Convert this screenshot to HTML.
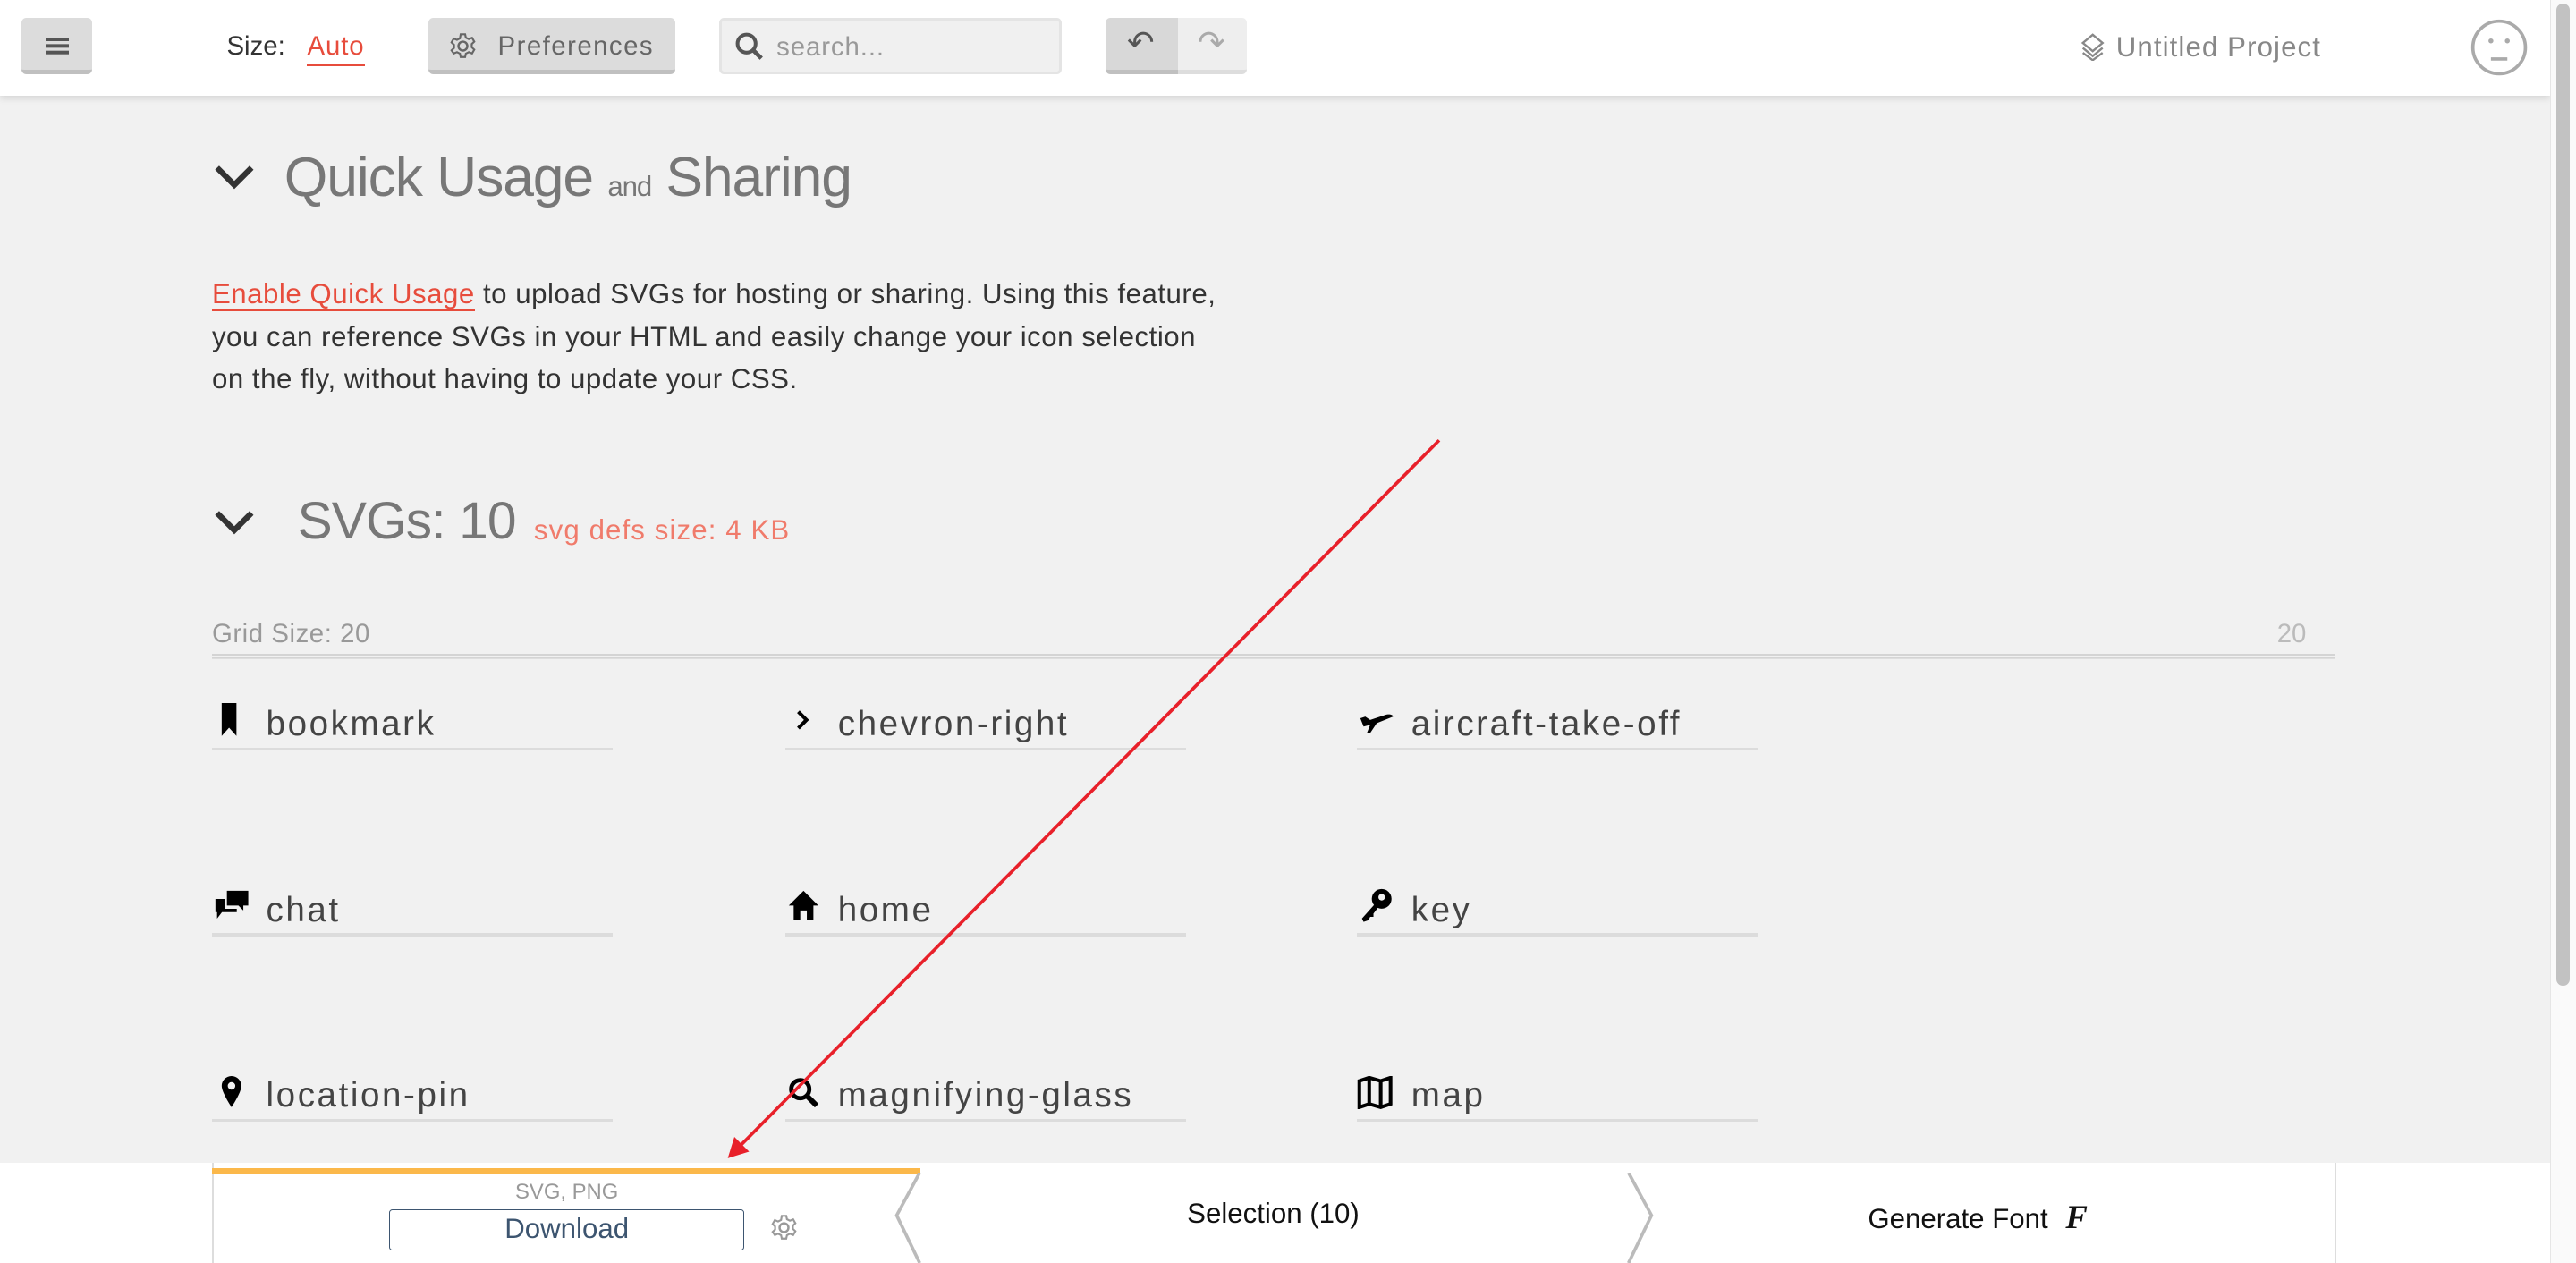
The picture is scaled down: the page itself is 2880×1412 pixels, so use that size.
<!DOCTYPE html>
<html><head><meta charset="utf-8"><style>
html,body{margin:0;padding:0;}
body{width:1568px;height:769px;zoom:1.83673;background:#f1f1f1;position:relative;overflow:hidden;font-family:"Liberation Sans",sans-serif;}
.a{position:absolute;white-space:nowrap;}
.hdr{position:absolute;left:0;top:0;width:1552px;height:58px;background:#fff;box-shadow:0 2px 4px rgba(0,0,0,.12);}
.btn{position:absolute;background:#dcdcdc;border-radius:3px;border-bottom:3px solid #c0c0c0;box-sizing:border-box;}
.item{position:absolute;width:244px;height:2px;background:#dcdcdc;}
.lbl{position:absolute;font-size:21px;color:#444;letter-spacing:1.4px;}
</style></head><body>
<div class="hdr">
 <div class="btn" style="left:13px;top:11px;width:43px;height:34px;"><div style="position:absolute;left:15px;top:12px;width:14px;height:2px;background:#555;box-shadow:0 4px 0 #555,0 8px 0 #555"></div></div>
 <div class="a" style="left:138px;top:19px;font-size:16px;color:#333">Size:</div>
 <div class="a" style="left:187px;top:19px;font-size:16px;color:#e74c3c;border-bottom:2px solid #e74c3c;padding-bottom:1px;letter-spacing:.5px">Auto</div>
 <div class="btn" style="left:261px;top:11px;width:150px;height:34px;">
  <svg class="a" style="left:12px;top:8px" width="18" height="18" viewBox="0 0 20 20"><circle cx="10" cy="10" r="3" fill="none" stroke="#666" stroke-width="1.5"/><path d="M8.5 2h3l.5 2.3 2 1 2.2-.9 1.5 2.6-1.7 1.6v2.2l1.7 1.6-1.5 2.6-2.2-.9-2 1-.5 2.3h-3l-.5-2.3-2-1-2.2.9L2.3 12.9 4 11.3V9.1L2.3 7.5 3.8 4.9l2.2.9 2-1z" fill="none" stroke="#666" stroke-width="1.3"/></svg>
  <div class="a" style="left:42px;top:8px;font-size:16px;color:#666;letter-spacing:.8px">Preferences</div></div>
 <div style="position:absolute;left:438px;top:11px;width:208px;height:34px;background:#f0f0f0;border:2px solid #e4e4e4;box-sizing:border-box;border-radius:3px">
  <svg class="a" style="left:7px;top:6px" width="20" height="20" viewBox="0 0 20 20"><circle cx="8" cy="8" r="5.5" fill="none" stroke="#555" stroke-width="2.2"/><path d="M12 12l5 5" stroke="#555" stroke-width="2.6"/></svg>
  <div class="a" style="left:33px;top:7px;font-size:16px;color:#999;letter-spacing:.5px">search...</div></div>
 <div class="btn" style="left:673px;top:11px;width:44px;height:34px;background:#d8d8d8;border-radius:3px 0 0 3px"><div class="a" style="left:13px;top:3px;font-size:20px;color:#555">&#8630;</div></div>
 <div class="btn" style="left:717px;top:11px;width:42px;height:34px;background:#eee;border-bottom-color:#ddd;border-radius:0 3px 3px 0"><div class="a" style="left:12px;top:3px;font-size:20px;color:#aaa">&#8631;</div></div>
 <svg class="a" style="left:1266px;top:20px" width="16" height="17" viewBox="0 0 16 17"><path d="M8 1l6 5-6 5-6-5z" fill="none" stroke="#888" stroke-width="1.3"/><path d="M2 9l6 5 6-5M2 12l6 4.5 6-4.5" fill="none" stroke="#888" stroke-width="1.3"/></svg>
 <div class="a" style="left:1288px;top:19px;font-size:17px;color:#888;letter-spacing:.6px">Untitled Project</div>
 <svg class="a" style="left:1503px;top:11px" width="36" height="36" viewBox="0 0 36 36"><circle cx="18" cy="18" r="16" fill="none" stroke="#aaa" stroke-width="2"/><circle cx="13" cy="14" r="1.5" fill="#aaa"/><circle cx="23" cy="14" r="1.5" fill="#aaa"/><path d="M13 25h10" stroke="#aaa" stroke-width="2"/></svg>
</div>
<div style="position:absolute;left:1552px;top:0;width:16px;height:769px;background:#fafafa;border-left:1px solid #e6e6e6"></div>
<div style="position:absolute;left:1556px;top:2px;width:8px;height:598px;background:#c2c2c2;border-radius:4px"></div>

<svg class="a" style="left:130px;top:99px" width="25" height="17" viewBox="0 0 25 17"><path d="M2 3l10.5 10.5L23 3" fill="none" stroke="#333" stroke-width="3.5"/></svg>
<div class="a" style="left:173px;top:88px;font-size:34px;color:#777;letter-spacing:-.6px">Quick Usage <span style="font-size:17px">and</span> Sharing</div>
<div class="a" style="left:129px;top:166px;font-size:17px;line-height:26px;color:#333;letter-spacing:.28px">
<span style="color:#e74c3c;border-bottom:1.5px solid #e74c3c">Enable Quick Usage</span> to upload SVGs for hosting or sharing. Using this feature,<br>you can reference SVGs in your HTML and easily change your icon selection<br>on the fly, without having to update your CSS.</div>

<svg class="a" style="left:130px;top:309px" width="25" height="17" viewBox="0 0 25 17"><path d="M2 3l10.5 10.5L23 3" fill="none" stroke="#333" stroke-width="3.5"/></svg>
<div class="a" style="left:181px;top:299px;font-size:32px;color:#777;letter-spacing:-.5px">SVGs: 10</div>
<div class="a" style="left:325px;top:313px;font-size:17px;color:#f07b6b;letter-spacing:.6px">svg defs size: 4 KB</div>
<div class="a" style="left:129px;top:377px;font-size:16px;color:#999;letter-spacing:.3px">Grid Size: 20</div>
<div class="a" style="left:1386px;top:377px;font-size:16px;color:#bbb">20</div>
<div style="position:absolute;left:129px;top:398px;width:1292px;height:1px;background:#d4d4d4;box-shadow:0 2px 0 #d4d4d4"></div>

<div class="item" style="left:129px;top:455px"></div><div class="item" style="left:478px;top:455px"></div><div class="item" style="left:826px;top:455px"></div>
<div class="item" style="left:129px;top:568px"></div><div class="item" style="left:478px;top:568px"></div><div class="item" style="left:826px;top:568px"></div>
<div class="item" style="left:129px;top:681px"></div><div class="item" style="left:478px;top:681px"></div><div class="item" style="left:826px;top:681px"></div>

<svg class="a" style="left:134px;top:428px" width="12" height="20" viewBox="0 0 12 20"><path d="M1 0h9v20l-4.5-5L1 20z"/></svg>
<div class="lbl" style="left:162px;top:429px">bookmark</div>
<svg class="a" style="left:483px;top:431px" width="12" height="14" viewBox="0 0 12 14"><path d="M3 2l5 5-5 5" fill="none" stroke="#000" stroke-width="2.2"/></svg>
<div class="lbl" style="left:510px;top:429px">chevron-right</div>
<svg class="a" style="left:827px;top:431px" width="22" height="16" viewBox="0 0 22 16"><path d="M1 6l3-1 3 2 9-3c3-1 5 0 5 1l-10 4-4 6-2 0 2-5-4 1z"/></svg>
<div class="lbl" style="left:859px;top:429px">aircraft-take-off</div>

<svg class="a" style="left:130px;top:541px" width="22" height="20" viewBox="0 0 22 20"><path d="M8 1h13v9h-3v3l-3-3H8z"/><path d="M1 6h6v6h7v2H5l-3 4v-4H1z"/></svg>
<div class="lbl" style="left:162px;top:542px">chat</div>
<svg class="a" style="left:479px;top:541px" width="20" height="20" viewBox="0 0 20 20"><path d="M10 1L1 10h3v9h4v-6h4v6h4v-9h3z"/></svg>
<div class="lbl" style="left:510px;top:542px">home</div>
<svg class="a" style="left:827px;top:540px" width="22" height="22" viewBox="0 0 22 22"><circle cx="14" cy="7" r="6"/><circle cx="14" cy="6" r="2" fill="#f1f1f1"/><path d="M10 10l-8 9 1 2 3-1 1-2 2 0 0-2 3-4z"/></svg>
<div class="lbl" style="left:859px;top:542px">key</div>

<svg class="a" style="left:134px;top:655px" width="14" height="20" viewBox="0 0 14 20"><path d="M7 0a6 6 0 0 1 6 6c0 4-6 13-6 13S1 10 1 6a6 6 0 0 1 6-6z"/><circle cx="7" cy="6" r="2.3" fill="#f1f1f1"/></svg>
<div class="lbl" style="left:162px;top:655px">location-pin</div>
<svg class="a" style="left:479px;top:655px" width="20" height="20" viewBox="0 0 20 20"><circle cx="8" cy="8" r="5.5" fill="none" stroke="#000" stroke-width="2.6"/><path d="M12 12l6 6" stroke="#000" stroke-width="3.2"/></svg>
<div class="lbl" style="left:510px;top:655px">magnifying-glass</div>
<svg class="a" style="left:826px;top:655px" width="22" height="20" viewBox="0 0 22 20"><path d="M1.5 3l6-2 7 2 6-2v16l-6 2-7-2-6 2z M7.5 1v16 M14.5 3v16" fill="none" stroke="#000" stroke-width="2.2"/></svg>
<div class="lbl" style="left:859px;top:655px">map</div>

<div style="position:absolute;left:0;top:708px;width:1552px;height:61px;background:#fff"></div>
<div style="position:absolute;left:129px;top:708px;width:1px;height:61px;background:#ddd"></div>
<div style="position:absolute;left:1421px;top:708px;width:1px;height:61px;background:#ddd"></div>
<div style="position:absolute;left:129px;top:711px;width:431px;height:4px;background:#fbb84a"></div>
<div class="a" style="left:345px;top:718px;transform:translateX(-50%);font-size:13px;color:#999">SVG, PNG</div>
<div style="position:absolute;left:237px;top:736px;width:216px;height:25px;border:1px solid #3d5570;border-radius:2px;box-sizing:border-box;text-align:center;font-size:17px;line-height:23px;color:#3d5570">Download</div>
<svg class="a" style="left:468px;top:738px" width="18" height="18" viewBox="0 0 20 20"><circle cx="10" cy="10" r="3" fill="none" stroke="#999" stroke-width="1.5"/><path d="M8.5 2h3l.5 2.3 2 1 2.2-.9 1.5 2.6-1.7 1.6v2.2l1.7 1.6-1.5 2.6-2.2-.9-2 1-.5 2.3h-3l-.5-2.3-2-1-2.2.9L2.3 12.9 4 11.3V9.1L2.3 7.5 3.8 4.9l2.2.9 2-1z" fill="none" stroke="#999" stroke-width="1.3"/></svg>
<svg class="a" style="left:543px;top:714px" width="20" height="55" viewBox="0 0 20 55"><path d="M17 0L3 26l14 29" fill="none" stroke="#bbb" stroke-width="2"/></svg>
<svg class="a" style="left:989px;top:714px" width="20" height="55" viewBox="0 0 20 55"><path d="M2 0l14 26L2 55" fill="none" stroke="#bbb" stroke-width="2"/></svg>
<div class="a" style="left:775px;top:729px;transform:translateX(-50%);font-size:17px;color:#111">Selection (10)</div>
<div class="a" style="left:1137px;top:729px;font-size:17px;color:#111">Generate Font <i style="font-family:'Liberation Serif',serif;font-weight:bold;font-size:20px;margin-left:6px">F</i></div>

<svg class="a" style="left:0;top:0" width="1568" height="769"><line x1="876" y1="268" x2="447" y2="701" stroke="#e8202a" stroke-width="2"/><path d="M443 705l4-13 9 9z" fill="#e8202a"/></svg>
</body></html>
